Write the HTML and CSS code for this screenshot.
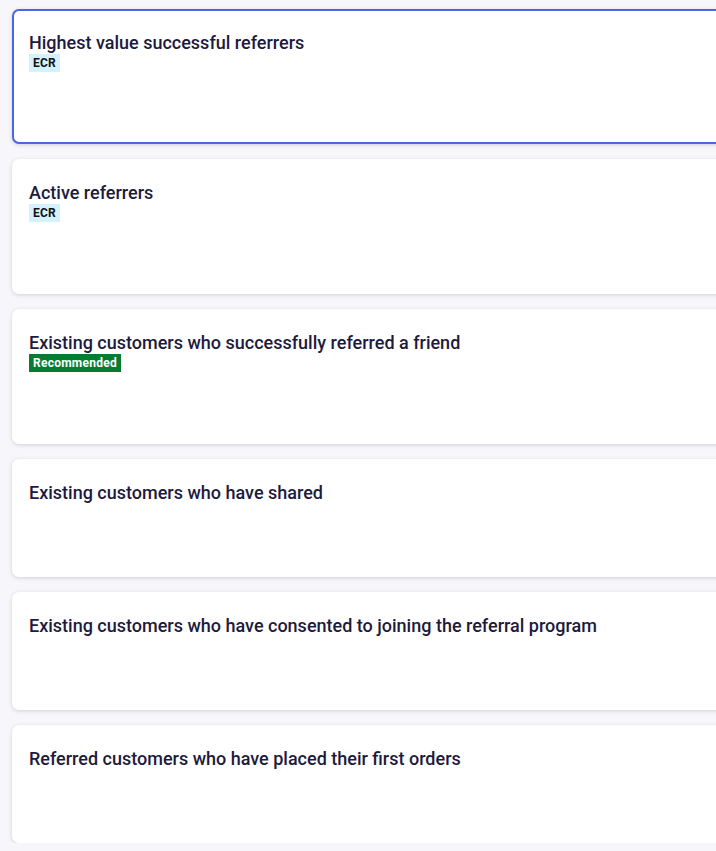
FILE: index.html
```html
<!DOCTYPE html>
<html>
<head>
<meta charset="utf-8">
<link rel="stylesheet" href="styles.css">
</head>
<body>
<div class="list">
  <div class="card selected">
    <div class="title">Highest value successful referrers</div>
    <div class="tags"><span class="tag tag-ecr">ECR</span></div>
  </div>
  <div class="card">
    <div class="title">Active referrers</div>
    <div class="tags"><span class="tag tag-ecr">ECR</span></div>
  </div>
  <div class="card">
    <div class="title">Existing customers who successfully referred a friend</div>
    <div class="tags"><span class="tag tag-rec">Recommended</span></div>
  </div>
  <div class="card">
    <div class="title">Existing customers who have shared</div>
  </div>
  <div class="card">
    <div class="title">Existing customers who have consented to joining the referral program</div>
  </div>
  <div class="card">
    <div class="title">Referred customers who have placed their first orders</div>
  </div>
</div>
</body>
</html>
```
FILE: styles.css
```css
html, body {
  margin: 0;
  padding: 0;
  background: #f7f7fb;
  overflow: hidden;
  font-family: Roboto, "Liberation Sans", sans-serif;
}
.list {
  padding: 9px 0 0 12px;
  display: flex;
  flex-direction: column;
  gap: 15px;
  width: 780px;
}
.card {
  box-sizing: border-box;
  min-height: 118px;
  background: #fff;
  border: 2px solid transparent;
  border-radius: 7px;
  box-shadow: 0 1px 4px rgba(30, 30, 60, 0.18);
  padding: 21px 15px 70px;
}
.card.selected {
  border-color: #4a66e0;
}
.title {
  font-size: 18px;
  line-height: 22px;
  font-weight: 500;
  color: #1d1a3d;
}
.tags {
  display: flex;
}
.tag {
  font-size: 12px;
  font-weight: 700;
  line-height: 18px;
  height: 18px;
  padding: 0 4px;
  letter-spacing: 0.25px;
}
.tag-ecr {
  background: #d4f2fd;
  color: #111;
}
.tag-rec {
  background: #057d31;
  color: #fff;
}
```
